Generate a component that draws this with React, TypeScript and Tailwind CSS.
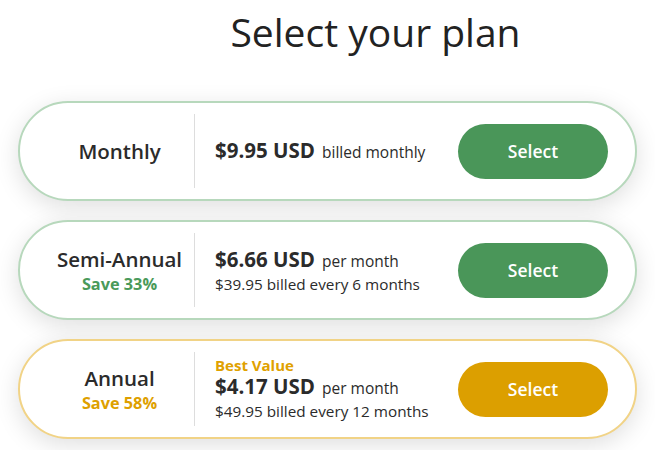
import React from "react";

type Plan = {
  name: string;
  save?: string;
  best?: boolean;
  price: string;
  unit: string;
  sub?: string;
  gold?: boolean;
};

const plans: Plan[] = [
  { name: "Monthly", price: "$9.95 USD", unit: "billed monthly" },
  { name: "Semi-Annual", save: "Save 33%", price: "$6.66 USD", unit: "per month", sub: "$39.95 billed every 6 months" },
  { name: "Annual", save: "Save 58%", best: true, price: "$4.17 USD", unit: "per month", sub: "$49.95 billed every 12 months", gold: true },
];

function Card({ p }: { p: Plan }) {
  return (
    <div
      className={`flex items-center h-[100px] rounded-full bg-white border-2 shadow-[0_6px_24px_rgba(0,0,0,0.13)] ${
        p.gold ? "border-[#f1d386]" : "border-[#b7d8bc]"
      }`}
    >
      <div className="w-[174px] pl-[25px] flex flex-col items-center justify-center">
        <div className="text-[20.5px] font-semibold text-[#2b2b2b] leading-[24px]">{p.name}</div>
        {p.save && (
          <div className={`mt-[3px] text-[16.3px] font-bold leading-[20px] ${p.gold ? "text-[#dea000]" : "text-[#4a9a5a]"}`}>{p.save}</div>
        )}
      </div>
      <div className="w-px h-[74px] bg-[#dddddd]" />
      <div className="flex-1 pl-[20px] flex flex-col justify-center">
        {p.best && <div className="text-[15px] font-bold text-[#e0a100] leading-[17px]">Best Value</div>}
        <div className="flex items-baseline text-[#2b2b2b] leading-[25px]">
          <span className="text-[20.5px] font-bold">{p.price}</span>
          <span className="ml-[7px] text-[15.5px]">{p.unit}</span>
        </div>
        {p.sub && <div className="text-[15.3px] text-[#2b2b2b] leading-[20px]">{p.sub}</div>}
      </div>
      <button
        className={`mr-[27px] w-[150px] h-[55px] rounded-full text-white text-[17.5px] font-semibold ${
          p.gold ? "bg-[#dc9f00]" : "bg-[#4a9659]"
        }`}
      >
        Select
      </button>
    </div>
  );
}

export default function App() {
  return (
    <div className="w-[655px] h-[450px] bg-white overflow-hidden" style={{ fontFamily: '"Open Sans", sans-serif' }}>
      <h1 className="pt-[6px] pl-[96px] text-center text-[39px] font-medium text-[#222] leading-[52px]">Select your plan</h1>
      <div className="mt-[43px] mx-[18px] flex flex-col gap-[19px]">
        {plans.map((p) => (
          <Card key={p.name} p={p} />
        ))}
      </div>
    </div>
  );
}
